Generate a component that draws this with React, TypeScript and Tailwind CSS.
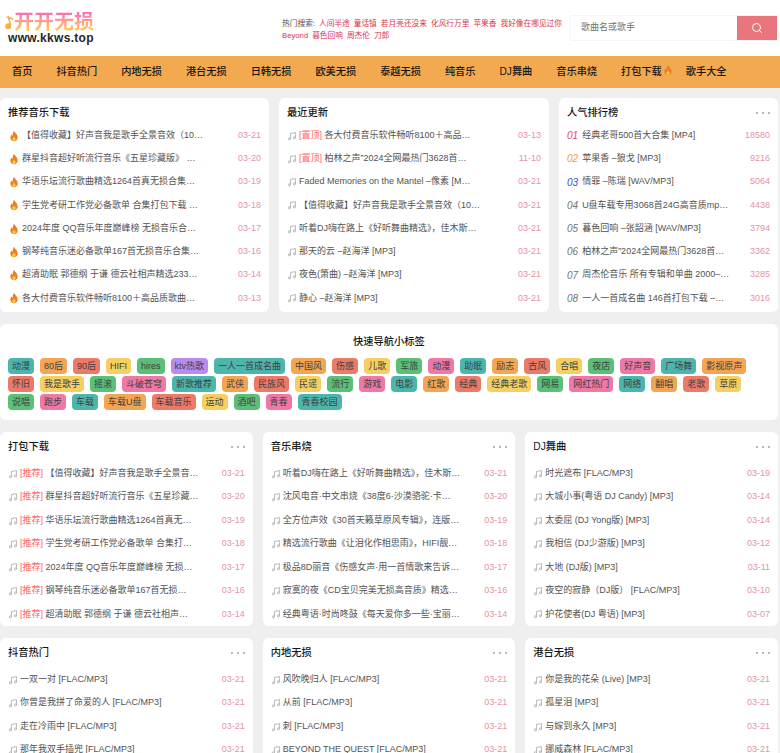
import { Search } from "lucide-react"

type Song = { title: string; date: string; tag?: string }

const NAV = ["首页", "抖音热门", "内地无损", "港台无损", "日韩无损", "欧美无损", "泰越无损", "纯音乐", "DJ舞曲", "音乐串烧", "打包下载", "歌手大全"]

const HOT_LINE_1 = ["人间半途", "童话镇", "若月亮还没来", "化风行万里", "苹果香", "我好像在哪见过你"]
const HOT_LINE_2 = ["Beyond", "暮色回响", "周杰伦", "刀郎"]

const RECOMMEND: Song[] = [
  { title: "【值得收藏】好声音我是歌手全景音效（10…", date: "03-21" },
  { title: "群星抖音超好听流行音乐《五星珍藏版》 …", date: "03-20" },
  { title: "华语乐坛流行歌曲精选1264首真无损合集…", date: "03-19" },
  { title: "学生党考研工作党必备歌单 合集打包下载 …", date: "03-18" },
  { title: "2024年度 QQ音乐年度巅峰榜 无损音乐合…", date: "03-17" },
  { title: "钢琴纯音乐迷必备歌单167首无损音乐合集…", date: "03-16" },
  { title: "超清助眠 郭德纲 于谦 德云社相声精选233…", date: "03-14" },
  { title: "各大付费音乐软件畅听8100＋高品质歌曲…", date: "03-13" },
]

const LATEST: Song[] = [
  { tag: "[置顶]", title: "各大付费音乐软件畅听8100＋高品…", date: "03-13" },
  { tag: "[置顶]", title: "柏林之声”2024全网最热门3628首…", date: "11-10" },
  { title: "Faded Memories on the Mantel –像素 [M…", date: "03-21" },
  { title: "【值得收藏】好声音我是歌手全景音效（10…", date: "03-21" },
  { title: "听着DJ嗨在路上《好听舞曲精选》，佳木斯…", date: "03-21" },
  { title: "那天的云 –赵海洋 [MP3]", date: "03-21" },
  { title: "夜色(箫曲) –赵海洋 [MP3]", date: "03-21" },
  { title: "静心 –赵海洋 [MP3]", date: "03-21" },
]

const RANK = [
  { title: "经典老哥500首大合集 [MP4]", count: "18580", color: "text-[#e0457b]" },
  { title: "苹果香 –狼戈 [MP3]", count: "9216", color: "text-[#ee9b3f]" },
  { title: "情罪 –陈瑞 [WAV/MP3]", count: "5064", color: "text-[#2f55c8]" },
  { title: "U盘车载专用3068首24G高音质mp…", count: "4438", color: "text-neutral-500" },
  { title: "暮色回响 –张韶涵 [WAV/MP3]", count: "3794", color: "text-neutral-500" },
  { title: "柏林之声”2024全网最热门3628首…", count: "3362", color: "text-neutral-500" },
  { title: "周杰伦音乐 所有专辑和单曲 2000–…", count: "3285", color: "text-neutral-500" },
  { title: "一人一首成名曲 146首打包下载 –…", count: "3016", color: "text-neutral-500" },
]

const PACK: Song[] = [
  { tag: "[推荐]", title: "【值得收藏】好声音我是歌手全景音…", date: "03-21" },
  { tag: "[推荐]", title: "群星抖音超好听流行音乐《五星珍藏…", date: "03-20" },
  { tag: "[推荐]", title: "华语乐坛流行歌曲精选1264首真无…", date: "03-19" },
  { tag: "[推荐]", title: "学生党考研工作党必备歌单 合集打…", date: "03-18" },
  { tag: "[推荐]", title: "2024年度 QQ音乐年度巅峰榜 无损…", date: "03-17" },
  { tag: "[推荐]", title: "钢琴纯音乐迷必备歌单167首无损…", date: "03-16" },
  { tag: "[推荐]", title: "超清助眠 郭德纲 于谦 德云社相声…", date: "03-14" },
]

const MEDLEY: Song[] = [
  { title: "听着DJ嗨在路上《好听舞曲精选》，佳木斯…", date: "03-21" },
  { title: "沈风电音·中文串烧《38度6·沙漠骆驼·卡…", date: "03-20" },
  { title: "全方位声效《30首天籁草原风专辑》，连版…", date: "03-19" },
  { title: "精选流行歌曲《让泪化作相思雨》，HIFI靓…", date: "03-18" },
  { title: "极品8D丽音《伤感女声·用一首情歌来告诉…", date: "03-17" },
  { title: "寂寞的夜《CD宝贝完美无损高音质》精选…", date: "03-16" },
  { title: "经典粤语·时尚咚鼓《每天爱你多一些·宝丽…", date: "03-14" },
]

const DJ: Song[] = [
  { title: "时光遮布 [FLAC/MP3]", date: "03-19" },
  { title: "大城小事(粤语 DJ Candy) [MP3]", date: "03-14" },
  { title: "太委屈 (DJ Yong版) [MP3]", date: "03-14" },
  { title: "我相信 (DJ少游版) [MP3]", date: "03-12" },
  { title: "大地 (DJ版) [MP3]", date: "03-11" },
  { title: "夜空的寂静（DJ版） [FLAC/MP3]", date: "03-10" },
  { title: "护花使者(DJ 粤语) [MP3]", date: "03-07" },
]

const DOUYIN: Song[] = [
  { title: "一双一对 [FLAC/MP3]", date: "03-21" },
  { title: "你曾是我拼了命爱的人 [FLAC/MP3]", date: "03-21" },
  { title: "走在冷雨中 [FLAC/MP3]", date: "03-21" },
  { title: "那年我双手插兜 [FLAC/MP3]", date: "03-21" },
]

const MAINLAND: Song[] = [
  { title: "风吹晚归人 [FLAC/MP3]", date: "03-21" },
  { title: "从前 [FLAC/MP3]", date: "03-21" },
  { title: "刺 [FLAC/MP3]", date: "03-21" },
  { title: "BEYOND THE QUEST [FLAC/MP3]", date: "03-21" },
]

const HKTW: Song[] = [
  { title: "你是我的花朵 (Live) [MP3]", date: "03-21" },
  { title: "孤星泪 [MP3]", date: "03-21" },
  { title: "与嫁到永久 [MP3]", date: "03-21" },
  { title: "挪威森林 [FLAC/MP3]", date: "03-21" },
]

const TEAL = "bg-[#4db6ac]"
const ORANGE = "bg-[#f2a654]"
const RED = "bg-[#ec7a68]"
const YELLOW = "bg-[#f5cf62]"
const GREEN = "bg-[#5cbf78]"
const PINK = "bg-[#ee79a6]"
const PURPLE = "bg-[#b98af0]"

const TAGS: [string, string][] = [
  ["动漫", TEAL], ["80后", ORANGE], ["90后", RED], ["HIFI", YELLOW], ["hires", GREEN], ["ktv热歌", PURPLE],
  ["一人一首成名曲", TEAL], ["中国风", ORANGE], ["伤感", RED], ["儿歌", YELLOW], ["军旅", GREEN], ["动漫", PINK],
  ["助眠", TEAL], ["励志", ORANGE], ["古风", RED], ["合唱", YELLOW], ["夜店", GREEN], ["好声音", PINK],
  ["广场舞", TEAL], ["影视原声", ORANGE], ["怀旧", RED], ["我是歌手", YELLOW], ["摇滚", GREEN], ["斗破苍穹", PINK],
  ["新歌推荐", TEAL], ["武侠", ORANGE], ["民族风", RED], ["民谣", YELLOW], ["流行", GREEN], ["游戏", PINK],
  ["电影", TEAL], ["红歌", ORANGE], ["经典", RED], ["经典老歌", YELLOW], ["网易", GREEN], ["网红热门", PINK],
  ["网络", TEAL], ["翻唱", ORANGE], ["老歌", RED], ["草原", YELLOW], ["说唱", GREEN], ["跑步", PINK],
  ["车载", TEAL], ["车载U盘", ORANGE], ["车载音乐", RED], ["运动", YELLOW], ["酒吧", GREEN], ["青春", PINK],
  ["青春校园", TEAL],
]

function Fire({ className = "size-3 shrink-0" }: { className?: string }) {
  return (
    <svg viewBox="0 0 16 16" className={className}>
      <path d="M8 1c.6 2.600 4.800 4.400 4.800 8.600A4.800 4.800 0 0 1 8 15a4.800 4.800 0 0 1-4.800-5.400c.2-1.800 1-2.800 1.800-3.600.2 1 .6 1.600 1.200 2C6 5.600 6.600 3 8 1z" fill="#ef7d22" />
      <path d="M8 8.500c.5 1.300 2.200 2 2.200 3.700A2.200 2.200 0 0 1 8 14.500a2.200 2.200 0 0 1-2.200-2.300c0-1.500 1.700-2 2.200-3.700z" fill="#fbd13f" />
    </svg>
  )
}

function Note() {
  return (
    <svg viewBox="0 0 16 16" fill="none" stroke="#a3a3a3" strokeWidth="1.2" className="size-2.5 shrink-0">
      <path d="M5.500 12.500V4l8-1.500V11" />
      <circle cx="3.800" cy="12.500" r="1.700" />
      <circle cx="11.800" cy="11" r="1.700" />
    </svg>
  )
}

function Dots() {
  return (
    <div className="flex gap-1">
      <span className="size-0.5 rounded-full bg-neutral-400" />
      <span className="size-0.5 rounded-full bg-neutral-400" />
      <span className="size-0.5 rounded-full bg-neutral-400" />
    </div>
  )
}

function Card({ title, more, list, children }: { title: string; more?: boolean; list: string; children: React.ReactNode }) {
  return (
    <div className="overflow-hidden rounded-md bg-white px-2 pt-2">
      <div className="flex h-3.5 items-center justify-between">
        <div className="text-[10.25px] font-medium whitespace-nowrap text-neutral-900">{title}</div>
        {more && <Dots />}
      </div>
      <div className={`grid ${list}`}>{children}</div>
    </div>
  )
}

function SongRow({ song, icon }: { song: Song; icon: React.ReactNode }) {
  return (
    <div className="flex items-center justify-between gap-2">
      <div className="flex min-w-0 items-center gap-0.5">
        {icon}
        <span className="whitespace-nowrap text-neutral-600">
          {song.tag && <span className="text-red-400">{song.tag} </span>}
          {song.title}
        </span>
      </div>
      <span className="shrink-0 text-[#e593a6]">{song.date}</span>
    </div>
  )
}

const TOP_LIST = "mt-1 mb-0.5 h-46.5 grid-rows-8"
const LOWER_LIST = "mt-2 h-41 grid-rows-7"

function SongCard({ title, songs, more = true, list = LOWER_LIST }: { title: string; songs: Song[]; more?: boolean; list?: string }) {
  return (
    <Card title={title} more={more} list={list}>
      {songs.map((s) => (
        <SongRow key={s.title} song={s} icon={<Note />} />
      ))}
    </Card>
  )
}

export default function App() {
  return (
    <div className="h-screen overflow-hidden bg-[#efefef] font-['Liberation_Sans','Noto_Sans_CJK_SC',sans-serif] text-[9px]">
      <header className="flex h-14 items-center border-b border-white bg-white pr-0.5 pl-1">
        <div className="flex flex-col">
          <div className="flex items-end">
            <svg viewBox="0 0 12 20" className="h-5 w-2.5 shrink-0" fill="none" stroke="#f4b049" strokeWidth="2">
              <path d="M3 4c3 0 5 1 8 3M5 3l3 11" />
              <circle cx="5" cy="15" r="2.500" fill="#f4b049" />
            </svg>
            <div className="bg-gradient-to-b from-pink-400 to-amber-300 bg-clip-text text-xl leading-5 font-semibold whitespace-nowrap text-transparent">
              开开无损
            </div>
          </div>
          <div className="pl-1 text-xs leading-3 font-bold tracking-wide text-neutral-800">www.kkws.top</div>
        </div>
        <div className="mt-1 mr-2 ml-auto text-[7.7px] leading-3 text-[#d9334f]">
          <div className="flex gap-1 whitespace-nowrap">
            <span className="text-neutral-600">热门搜索:</span>
            {HOT_LINE_1.map((h) => (
              <span key={h}>{h}</span>
            ))}
          </div>
          <div className="flex gap-1 whitespace-nowrap">
            {HOT_LINE_2.map((h) => (
              <span key={h}>{h}</span>
            ))}
          </div>
        </div>
        <div className="flex h-6.5 w-52 shrink-0 border border-neutral-100">
          <div className="flex flex-1 items-center pl-2.5 text-neutral-500">歌曲名或歌手</div>
          <div className="flex w-10 items-center justify-center bg-[#e9757d]">
            <Search className="size-3 text-white" />
          </div>
        </div>
      </header>

      <nav className="flex h-8 items-center gap-6 bg-[#f2a950] px-3 text-[10.2px] font-medium text-neutral-900">
        {NAV.map((n) => (
          <span key={n} className="relative whitespace-nowrap">
            {n}
            {n === "打包下载" && <Fire className="absolute top-0 left-full size-3" />}
          </span>
        ))}
      </nav>

      <main className="flex flex-col gap-3 pt-2.5 pr-0.5">
        <div className="grid grid-cols-[269px_270px_1fr] gap-2.5">
          <Card title="推荐音乐下载" list={TOP_LIST}>
            {RECOMMEND.map((s) => (
              <SongRow key={s.title} song={s} icon={<Fire />} />
            ))}
          </Card>
          <SongCard title="最近更新" songs={LATEST} more={false} list={TOP_LIST} />
          <Card title="人气排行榜" more list={TOP_LIST}>
            {RANK.map((r, i) => (
              <div key={r.title} className="flex items-center justify-between gap-2">
                <div className="flex min-w-0 items-center gap-1">
                  <span className={`text-[10px] italic ${r.color}`}>{`0${i + 1}`}</span>
                  <span className="whitespace-nowrap text-neutral-600">{r.title}</span>
                </div>
                <span className="shrink-0 text-[#e593a6]">{r.count}</span>
              </div>
            ))}
          </Card>
        </div>

        <section className="rounded-md bg-white px-2 pt-2.5 pb-2.5">
          <div className="mb-2 text-center text-[10.25px] leading-4 font-medium text-neutral-900">快速导航小标签</div>
          <div className="flex flex-wrap gap-x-1.5 gap-y-0.5">
            {TAGS.map(([name, color], i) => (
              <span key={i} className={`rounded-sm px-1 leading-4 text-neutral-700 ${color}`}>
                {name}
              </span>
            ))}
          </div>
        </section>

        <div className="grid grid-cols-3 gap-2.5">
          <SongCard title="打包下载" songs={PACK} />
          <SongCard title="音乐串烧" songs={MEDLEY} />
          <SongCard title="DJ舞曲" songs={DJ} />
        </div>

        <div className="grid grid-cols-3 gap-2.5">
          <SongCard title="抖音热门" songs={DOUYIN} />
          <SongCard title="内地无损" songs={MAINLAND} />
          <SongCard title="港台无损" songs={HKTW} />
        </div>
      </main>
    </div>
  )
}
